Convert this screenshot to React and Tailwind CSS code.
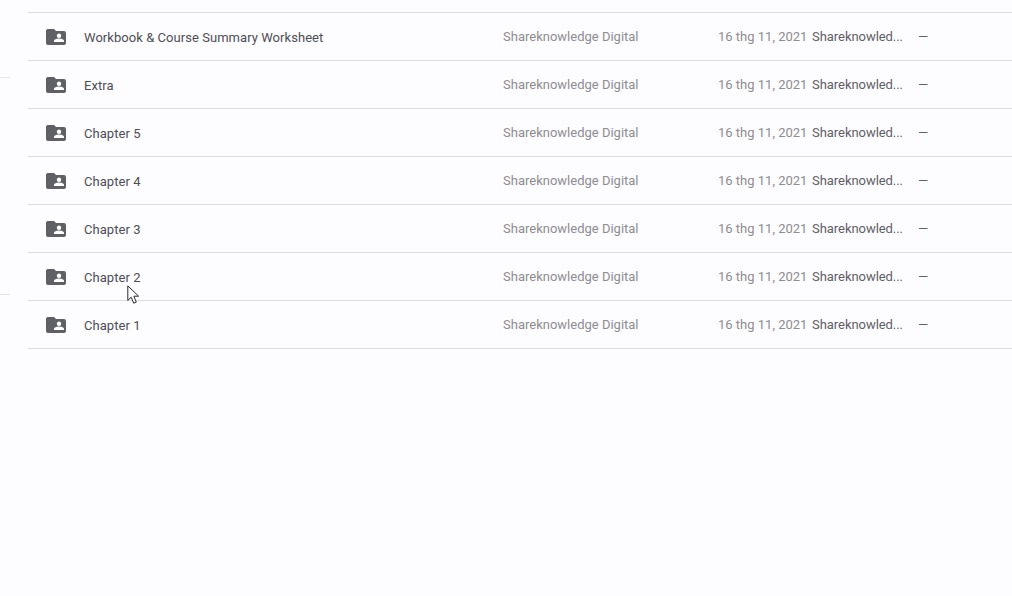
const folders = [
  'Workbook & Course Summary Worksheet',
  'Extra',
  'Chapter 5',
  'Chapter 4',
  'Chapter 3',
  'Chapter 2',
  'Chapter 1',
]

function SharedFolderIcon() {
  return (
    <svg width="24" height="24" viewBox="0 0 24 24" className="shrink-0">
      <path
        fill="#5f6066"
        d="M4 4h6l2 2h8c1.1 0 2 .9 2 2v10c0 1.1-.9 2-2 2H4c-1.1 0-2-.9-2-2V6c0-1.1.9-2 2-2z"
      />
      <circle cx="15" cy="10.8" r="2.2" fill="#fdfcfe" />
      <path fill="#fdfcfe" d="M10 17v-1c0-1.6 3.3-2.4 5-2.4s5 .8 5 2.4v1z" />
    </svg>
  )
}

function Cursor() {
  return (
    <svg width="14" height="20" viewBox="0 0 14 20" className="absolute left-[127px] top-[285px]">
      <path
        fill="#fff"
        stroke="#2b2b2e"
        strokeWidth="1"
        d="M.8.8v14.6l3.4-3.2 2.5 6 2.6-1.1-2.5-5.9h4.8z"
      />
    </svg>
  )
}

export default function App() {
  return (
    <div className="relative flex h-[596px] w-[1012px] overflow-hidden bg-[#fdfcfe] font-['Roboto',sans-serif]">
      <div className="w-[28px] shrink-0">
        <div className="mt-[77px] h-px w-[10px] bg-[#e6e5e8]" />
        <div className="mt-[216px] h-px w-[10px] bg-[#e6e5e8]" />
      </div>

      <div className="flex-1">
        <div className="h-[13px] border-b border-[#dadce0]" />
        {folders.map(name => (
          <div key={name} className="flex h-[48px] items-center border-b border-[#dadce0] text-[13px]">
            <div className="flex w-[56px] shrink-0 pl-[16px] pt-px">
              <SharedFolderIcon />
            </div>
            <div className="w-[419px] shrink-0 pt-[3px] tracking-[0.05px] text-[#4d4e55]">{name}</div>
            <div className="w-[215px] shrink-0 pt-px text-[#8d8c92]">Shareknowledge Digital</div>
            <div className="w-[94px] shrink-0 pt-px text-[#8d8c92]">16 thg 11, 2021</div>
            <div className="w-[107px] shrink-0 pt-px tracking-[-0.05px] text-[#5f6066]">Shareknowled...</div>
            <div className="-ml-px pt-px text-[#5f6066]">—</div>
          </div>
        ))}
      </div>

      <Cursor />
    </div>
  )
}
